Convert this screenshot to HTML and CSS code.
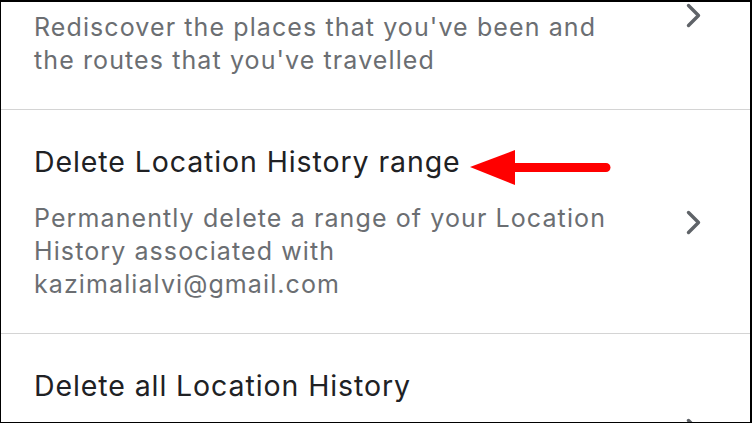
FILE: index.html
```html
<!DOCTYPE html>
<html lang="en">
<head>
<meta charset="utf-8">
<title>Location History settings</title>
<link rel="stylesheet" href="styles.css">
</head>
<body>
<div class="frame">
  <div class="list">
    <div class="row">
      <div class="text">
        <div class="title">Timeline</div>
        <div class="desc">Rediscover the places that you've been and the routes that you've travelled</div>
      </div>
      <svg class="chev" viewBox="0 0 18 26" width="18" height="26"><path d="M3.5 2.5 L13.5 12.5 L3.5 22.5" fill="none" stroke="#5f6368" stroke-width="3.4" stroke-linecap="round" stroke-linejoin="round"/></svg>
    </div>
    <div class="row">
      <div class="text">
        <div class="title">Delete Location History range</div>
        <div class="desc">Permanently delete a range of your Location History associated with kazimalialvi@gmail.com</div>
      </div>
      <svg class="chev" viewBox="0 0 18 26" width="18" height="26"><path d="M3.5 2.5 L13.5 12.5 L3.5 22.5" fill="none" stroke="#5f6368" stroke-width="3.4" stroke-linecap="round" stroke-linejoin="round"/></svg>
    </div>
    <div class="row">
      <div class="text">
        <div class="title">Delete all Location History</div>
        <div class="desc">Permanently delete all of your Location History associated with this account</div>
      </div>
      <svg class="chev" viewBox="0 0 18 26" width="18" height="26"><path d="M3.5 2.5 L13.5 12.5 L3.5 22.5" fill="none" stroke="#5f6368" stroke-width="3.4" stroke-linecap="round" stroke-linejoin="round"/></svg>
    </div>
  </div>
  <svg class="arrow" viewBox="0 0 146 40" width="146" height="40">
    <path d="M2 19 L47 2 L47 37 Z" fill="#ff0000"/>
    <line x1="44" y1="19.5" x2="138" y2="19.5" stroke="#ff0000" stroke-width="9" stroke-linecap="round"/>
  </svg>
</div>
</body>
</html>
```

FILE: styles.css
```css
* { box-sizing: border-box; }
html, body { margin: 0; padding: 0; background: #ffffff; }
.frame {
  position: relative;
  width: 752px;
  height: 423px;
  overflow: hidden;
  border-style: solid;
  border-color: #000000;
  border-width: 2px 2px 1px 1px;
  background: #ffffff;
  font-family: Inter, "Noto Sans", sans-serif;
}
.list {
  display: flex;
  flex-direction: column;
  margin-top: -83px;
}
.row {
  display: flex;
  align-items: center;
  padding: 35px 47px 32px 33px;
  border-bottom: 1px solid #d4d4d4;
}
.text {
  flex: 1;
  max-width: 590px;
}
.title {
  font-size: 28.5px;
  line-height: 34px;
  letter-spacing: 0.9px;
  color: #202124;
  margin-bottom: 23px;
}
.desc {
  font-size: 25px;
  line-height: 33px;
  letter-spacing: 1.1px;
  color: #6b6e72;
}
.chev {
  margin-left: auto;
  flex: none;
}
.arrow {
  position: absolute;
  left: 467px;
  top: 146px;
}
```
